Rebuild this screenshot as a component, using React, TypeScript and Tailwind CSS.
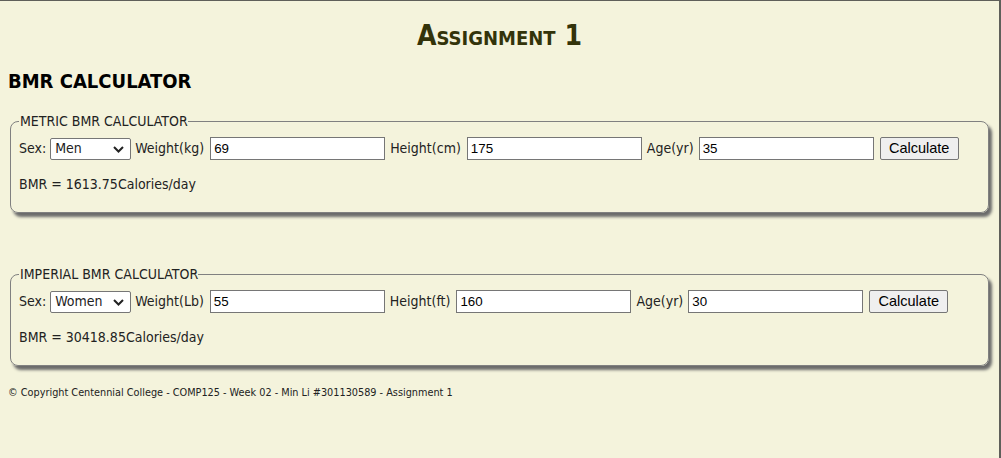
const font = "font-['DejaVu_Sans_Condensed','DejaVu_Sans',sans-serif]";

interface CalcProps {
  title: string;
  sex: string;
  weightLabel: string;
  weight: string;
  heightLabel: string;
  height: string;
  age: string;
  result: string;
}

const Calculator = ({ title, sex, weightLabel, weight, heightLabel, height, age, result }: CalcProps) => {
  return (
    <fieldset className="mx-[2px] rounded-[8px] border-[1.5px] border-solid border-[#808080] px-[8px] pb-[20px] pt-0 shadow-[3px_4px_3px_#6b6b6b]">
      <legend className="pl-[1px] text-[14px] leading-[16px] text-[#222]">{title}</legend>
      <div className="mt-[8px] flex items-center gap-[4px] text-[14px] text-[#222]">
        <span>Sex:</span>
        <div className="relative flex h-[22px] w-[81px] items-center rounded-[2px] border border-[#767676] bg-white pl-[4px] text-[14px]">
          {sex}
          <svg className="absolute right-[6px] top-[7px]" width="11" height="7" viewBox="0 0 11 7" fill="none">
            <path d="M1 1l4.5 4.5L10 1" stroke="#222" strokeWidth="2" />
          </svg>
        </div>
        <span>{weightLabel}</span>
        <div className="ml-[2px] flex h-[23px] w-[175px] items-center border border-[#767676] bg-white pl-[3px] font-['Liberation_Sans',Arial,sans-serif] text-[13.33px] text-black">
          {weight}
        </div>
        <span className="ml-[1px]">{heightLabel}</span>
        <div className="ml-[2px] flex h-[23px] w-[175px] items-center border border-[#767676] bg-white pl-[3px] font-['Liberation_Sans',Arial,sans-serif] text-[13.33px] text-black">
          {height}
        </div>
        <span className="ml-[1px]">Age(yr)</span>
        <div className="ml-[1px] flex h-[23px] w-[175px] items-center border border-[#767676] bg-white pl-[3px] font-['Liberation_Sans',Arial,sans-serif] text-[13.33px] text-black">
          {age}
        </div>
        <button className="ml-[2px] h-[23px] w-[79px] rounded-[2px] border border-[#767676] bg-[#efefef] font-['Liberation_Sans',Arial,sans-serif] text-[14.5px] text-black">
          Calculate
        </button>
      </div>
      <p className="mt-[16px] text-[14px] leading-[16px] text-[#222]">BMR = {result}Calories/day</p>
    </fieldset>
  );
};

export default function App() {
  return (
    <div className={`h-[458px] w-[1001px] overflow-hidden border-t border-r-2 border-[#5f5f5a] bg-[#f4f3dc] ${font}`}>
      <div className="px-[8px]">
        <h1 className="mt-[20px] text-center text-[28px] font-bold leading-[30px] text-[#33330a] [font-variant:small-caps]">
          Assignment 1
        </h1>
        <h2 className="mt-[18px] text-[20px] font-bold leading-[24px] text-black">BMR CALCULATOR</h2>
        <div className="mt-[20px]">
          <Calculator
            title="METRIC BMR CALCULATOR"
            sex="Men"
            weightLabel="Weight(kg)"
            weight="69"
            heightLabel="Height(cm)"
            height="175"
            age="35"
            result="1613.75"
          />
        </div>
        <div className="mt-[53px]">
          <Calculator
            title="IMPERIAL BMR CALCULATOR"
            sex="Women"
            weightLabel="Weight(Lb)"
            weight="55"
            heightLabel="Height(ft)"
            height="160"
            age="30"
            result="30418.85"
          />
        </div>
        <p className="mt-[21px] text-[10.8px] leading-[12px] text-[#222]">
          © Copyright Centennial College - COMP125 - Week 02 - Min Li #301130589 - Assignment 1
        </p>
      </div>
    </div>
  );
}
